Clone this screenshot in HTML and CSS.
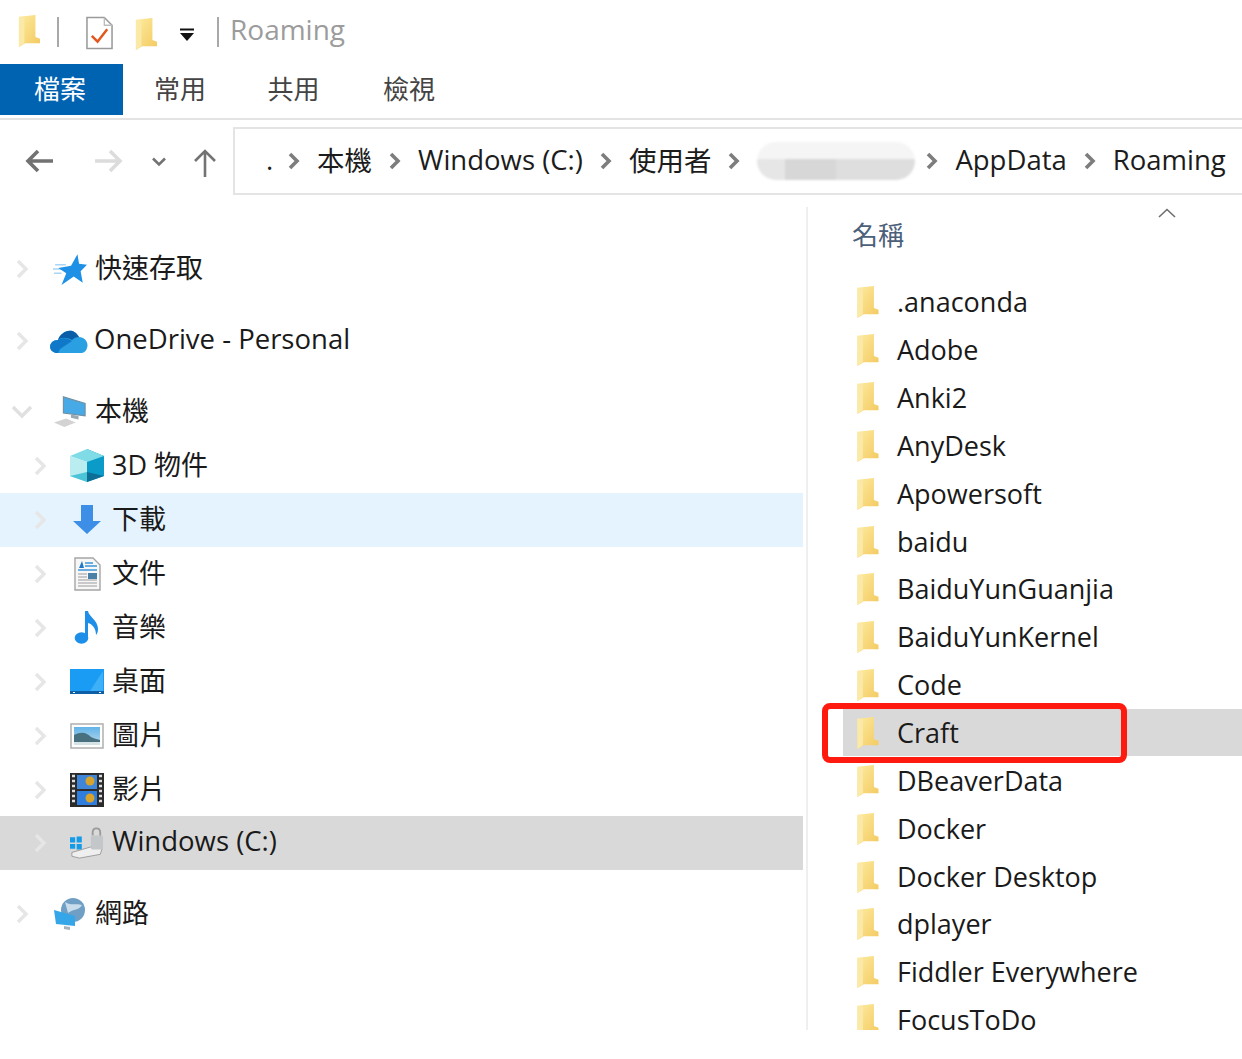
FILE: index.html
```html
<!DOCTYPE html>
<html lang="zh-Hant">
<head>
<meta charset="utf-8">
<title>Roaming</title>
<link rel="stylesheet" href="styles.css">
</head>
<body>
<svg class="defs" width="0" height="0" aria-hidden="true">
  <defs>
    <linearGradient id="fg" x1="0" y1="0" x2="1" y2="1"><stop offset="0" stop-color="#fdeb9f"/><stop offset="1" stop-color="#f3c95f"/></linearGradient>
    <linearGradient id="sky" x1="0" y1="0" x2="0" y2="1"><stop offset="0" stop-color="#62b4e8"/><stop offset="1" stop-color="#bcd9ea"/></linearGradient>
    <symbol id="folder" viewBox="0 0 24 36">
      <path d="M1 3 L19 1 V25 L24 27 V32 L8 32 L1 36 Z" fill="url(#fg)"/>
      <path d="M1 3 L7 4 V32 L1 36 Z" fill="#fbe9a8"/>
    </symbol>
    <symbol id="chev" viewBox="0 0 16 24">
      <path d="M4 4 L12 12 L4 20" fill="none" stroke="#e6e6e6" stroke-width="3.4"/>
    </symbol>
    <symbol id="sep" viewBox="0 0 14 20">
      <path d="M3 3 L10 10 L3 17" fill="none" stroke="#7d7d7d" stroke-width="3.6"/>
    </symbol>
  </defs>
</svg>
<div class="window">
  <div class="titlebar">
    <svg class="t-folder"><use href="#folder"/></svg>
    <span class="vline v1"></span>
    <svg class="t-check" viewBox="0 0 28 34"><path d="M1 1 H19 L27 9 V33 H1 Z" fill="#fff" stroke="#9a9a9a" stroke-width="1.6"/><path d="M19 1 V9 H27" fill="none" stroke="#bdbdbd" stroke-width="1.4"/><path d="M6 20 L12 26 L22 13" fill="none" stroke="#e2571e" stroke-width="2.6"/></svg>
    <svg class="t-folder t-f2"><use href="#folder"/></svg>
    <svg class="t-drop" viewBox="0 0 14 14"><path d="M0 1.5 H14" stroke="#111" stroke-width="2"/><path d="M0 5 H14 L7 13 Z" fill="#111"/></svg>
    <span class="vline v2"></span>
    <span class="t-name">Roaming</span>
  </div>
  <div class="ribbon">
    <div class="tab tab-file">檔案</div>
    <div class="tab tab-home">常用</div>
    <div class="tab tab-share">共用</div>
    <div class="tab tab-view">檢視</div>
  </div>
  <div class="addrrow">
    <svg class="nav-i back" viewBox="0 0 30 24"><path d="M28 12 H3 M13 2 L3 12 L13 22" fill="none" stroke="#727272" stroke-width="3.6"/></svg>
    <svg class="nav-i fwd" viewBox="0 0 30 24"><path d="M2 12 H27 M17 2 L27 12 L17 22" fill="none" stroke="#dcdcdc" stroke-width="3.6"/></svg>
    <svg class="nav-i down" viewBox="0 0 14 10"><path d="M1 1.5 L7 7.5 L13 1.5" fill="none" stroke="#737373" stroke-width="2.6"/></svg>
    <svg class="nav-i up" viewBox="0 0 24 30"><path d="M12 29 V3 M2 13 L12 3 L22 13" fill="none" stroke="#737373" stroke-width="2.6"/></svg>
    <div class="addr">
      <span class="dot">.</span>
      <svg class="sep"><use href="#sep"/></svg>
      <span>本機</span>
      <svg class="sep"><use href="#sep"/></svg>
      <span>Windows (C:)</span>
      <svg class="sep"><use href="#sep"/></svg>
      <span>使用者</span>
      <svg class="sep"><use href="#sep"/></svg>
      <span class="blurred"></span>
      <svg class="sep"><use href="#sep"/></svg>
      <span>AppData</span>
      <svg class="sep"><use href="#sep"/></svg>
      <span>Roaming</span>
    </div>
  </div>
  <div class="main">
    <nav class="tree">
      <div class="node lvl0 quick">
        <svg class="chev"><use href="#chev"/></svg>
        <svg class="ico" viewBox="0 0 32 32"><path d="M2 12 H12 M0 16 H9 M1 20 H8" stroke="#a9d6f5" stroke-width="1.4"/><path d="M23 2 L24.500 11 L32 12 L26 18 L28 29 L19.500 23 L8 31 L12.500 20 L5 15 L17 13 Z" fill="#1e90e6"/></svg>
        <span class="lbl">快速存取</span>
      </div>
      <div class="node lvl0 drive">
        <svg class="chev"><use href="#chev"/></svg>
        <svg class="ico ico-od" viewBox="0 0 38 26"><path d="M8 25 C-3 25 -2 12 8 12 C11 3 23 -2 29 9 C35 9 39 15 37 20 C36 24 33 25 31 25 Z" fill="#2a9fe2"/><path d="M8 12 C11 3 23 -2 29 9 C26 9 24 10 22 12 C17 9 11 9 8 12 Z" fill="#0a5ea8"/><path d="M8 25 C-3 25 -2 12 8 12 C13 9 18 10 22 13 L10 21 Z" fill="#0f78c8"/></svg>
        <span class="lbl lbl-l">OneDrive - Personal</span>
      </div>
      <div class="node lvl0 pc">
        <svg class="chev chev-open" viewBox="0 0 24 16"><path d="M3 3 L12 12 L21 3" fill="none" stroke="#e0e0e0" stroke-width="3.4"/></svg>
        <svg class="ico" viewBox="0 0 36 34"><path d="M11 1 L34 8 V21 L11 18 Z" fill="#47a9e6" stroke="#6f8fa3" stroke-width="1.2"/><path d="M19 20 L27 21 V25 L19 23 Z" fill="#9aa8b2"/><path d="M1 28 L14 24 L24 28 L12 33 Z" fill="#d3d3d3"/></svg>
        <span class="lbl">本機</span>
      </div>
      <div class="node lvl1 r3d">
        <svg class="chev"><use href="#chev"/></svg>
        <svg class="ico" viewBox="0 0 34 34"><path d="M17 0 L34 7 V27 L17 33 Z" fill="#0a9bc9"/><path d="M17 0 L34 7 L17 13 L0 7 Z" fill="#7fdce6"/><path d="M0 7 L17 13 V33 L0 27 Z" fill="#b9edf0"/><path d="M17 23 L34 27 L17 33 Z" fill="#0d6f96"/><path d="M0 27 L17 23 V33 Z" fill="#4cc4d8"/></svg>
        <span class="lbl">3D 物件</span>
      </div>
      <div class="node lvl1 hover">
        <svg class="chev"><use href="#chev"/></svg>
        <svg class="ico" viewBox="0 0 34 34"><path d="M11 2 H23 V18 H31 L17 31 L3 18 H11 Z" fill="#3c8ee6"/></svg>
        <span class="lbl">下載</span>
      </div>
      <div class="node lvl1">
        <svg class="chev"><use href="#chev"/></svg>
        <svg class="ico" viewBox="0 0 34 34"><path d="M5 1 H23 L30 8 V33 H5 Z" fill="#f7f7f7" stroke="#a5a5a5" stroke-width="1.4"/><path d="M9 11 L12 4 L14 11 Z" fill="#1e78c8"/><path d="M15 6 H23 M15 9 H27 M8 13 H27" stroke="#3d96da" stroke-width="1.3"/><path d="M8 17 H17 M8 20 H17 M8 23 H27 M8 26 H27 M8 29 H27" stroke="#9b9b9b" stroke-width="1.2"/><rect x="18" y="16" width="9" height="6" fill="#4a7fa8"/></svg>
        <span class="lbl">文件</span>
      </div>
      <div class="node lvl1">
        <svg class="chev"><use href="#chev"/></svg>
        <svg class="ico" viewBox="0 0 34 34"><ellipse cx="11.500" cy="27" rx="6.800" ry="5.800" fill="#1e8fe8"/><path d="M15 27 V0 H18 C19 6 28 9 28 18 C28 21 27 23 26 24 C26 17 22 13 18 12 V27 Z" fill="#1e8fe8"/></svg>
        <span class="lbl">音樂</span>
      </div>
      <div class="node lvl1">
        <svg class="chev"><use href="#chev"/></svg>
        <svg class="ico" viewBox="0 0 34 26"><rect width="34" height="25" fill="#1a9cf5"/><path d="M20 22 L33 2 V22 Z" fill="#3db0f8"/><rect y="22" width="34" height="3" fill="#0d5fa8"/><path d="M3 23.500 H5 M29 23.500 H31" stroke="#fff"/></svg>
        <span class="lbl">桌面</span>
      </div>
      <div class="node lvl1">
        <svg class="chev"><use href="#chev"/></svg>
        <svg class="ico" viewBox="0 0 34 26"><rect x="1" y="1" width="32" height="24" fill="#fff" stroke="#b4b4b4" stroke-width="1.6"/><rect x="4" y="4" width="26" height="18" fill="url(#sky)"/><path d="M4 12 C12 8 17 10 21 14 C25 16 28 16 30 17 V19 H4 Z" fill="#48707f"/><path d="M4 19 H30 V22 H4 Z" fill="#d5e2e6"/></svg>
        <span class="lbl">圖片</span>
      </div>
      <div class="node lvl1">
        <svg class="chev"><use href="#chev"/></svg>
        <svg class="ico" viewBox="0 0 34 34"><rect width="34" height="34" fill="#2b2b2b"/><rect x="7" y="2" width="20" height="14" fill="#3f86d8"/><rect x="7" y="18" width="20" height="14" fill="#2f7ddc"/><circle cx="20" cy="8" r="4.500" fill="#d9a22a"/><circle cx="20" cy="25" r="4.500" fill="#d9a22a"/><path d="M2 3 H5 M2 8 H5 M2 13 H5 M2 18 H5 M2 23 H5 M2 28 H5 M29 3 H32 M29 8 H32 M29 13 H32 M29 18 H32 M29 23 H32 M29 28 H32" stroke="#dedede" stroke-width="2.400"/></svg>
        <span class="lbl">影片</span>
      </div>
      <div class="node lvl1 selected">
        <svg class="chev"><use href="#chev"/></svg>
        <svg class="ico" viewBox="0 0 36 34"><path d="M0 11 H5.500 V16.500 H0 Z M7 10 H12.500 V16.500 H7 Z M0 18 H5.500 V23 H0 Z M7 18 H12.500 V24 H7 Z" fill="#169be8"/><path d="M2 27 L26 20 L34 23 L32 29 L10 33 L2 31 Z" fill="#efefef" stroke="#8a8a8a" stroke-width=".8"/><path d="M24 9 V6 C24 0 32 0 32 6 V10" fill="none" stroke="#9b9b9b" stroke-width="2"/><rect x="22" y="9" width="13" height="15" rx="2" fill="#c3c7c9"/></svg>
        <span class="lbl lbl-l lbl-c">Windows (C:)</span>
      </div>
      <div class="node lvl0 net">
        <svg class="chev"><use href="#chev"/></svg>
        <svg class="ico" viewBox="0 0 34 34"><circle cx="20" cy="13" r="12" fill="#6f9fc4"/><path d="M12 5 C18 9 24 6 29 8 C27 13 20 12 15 16 Z" fill="#c9dceb"/><path d="M1 13 L22 19 V29 L3 27 Z" fill="#35a6e8"/><path d="M11 29 L17 30 V33 L11 32 Z" fill="#a5b2bb"/></svg>
        <span class="lbl">網路</span>
      </div>
    </nav>
    <div class="divider"></div>
    <section class="files">
      <svg class="sort" viewBox="0 0 18 10"><path d="M1 9 L9 1.500 L17 9" fill="none" stroke="#6e6e6e" stroke-width="1.600"/></svg>
      <div class="colhead">名稱</div>
      <ul class="list">
        <li class="item"><svg class="fold"><use href="#folder"/></svg><span>.anaconda</span></li>
        <li class="item"><svg class="fold"><use href="#folder"/></svg><span>Adobe</span></li>
        <li class="item"><svg class="fold"><use href="#folder"/></svg><span>Anki2</span></li>
        <li class="item"><svg class="fold"><use href="#folder"/></svg><span>AnyDesk</span></li>
        <li class="item"><svg class="fold"><use href="#folder"/></svg><span>Apowersoft</span></li>
        <li class="item"><svg class="fold"><use href="#folder"/></svg><span>baidu</span></li>
        <li class="item"><svg class="fold"><use href="#folder"/></svg><span>BaiduYunGuanjia</span></li>
        <li class="item"><svg class="fold"><use href="#folder"/></svg><span>BaiduYunKernel</span></li>
        <li class="item"><svg class="fold"><use href="#folder"/></svg><span>Code</span></li>
        <li class="item item-sel"><svg class="fold"><use href="#folder"/></svg><span>Craft</span></li>
        <li class="item"><svg class="fold"><use href="#folder"/></svg><span>DBeaverData</span></li>
        <li class="item"><svg class="fold"><use href="#folder"/></svg><span>Docker</span></li>
        <li class="item"><svg class="fold"><use href="#folder"/></svg><span>Docker Desktop</span></li>
        <li class="item"><svg class="fold"><use href="#folder"/></svg><span>dplayer</span></li>
        <li class="item"><svg class="fold"><use href="#folder"/></svg><span>Fiddler Everywhere</span></li>
        <li class="item"><svg class="fold"><use href="#folder"/></svg><span>FocusToDo</span></li>
      </ul>
      <div class="redbox"></div>
    </section>
  </div>
</div>
</body>
</html>
```
FILE: styles.css
```css
html, body { margin: 0; padding: 0; background: #fff; }
body { width: 1242px; height: 1059px; overflow: hidden; }
.defs { position: absolute; }
.window {
  width: 1242px; height: 1059px; display: flex; flex-direction: column;
  font-family: "Open Sans", "Noto Sans CJK TC", sans-serif; color: #1a1a1a; font-size: 28px;
}
.titlebar { height: 64px; display: flex; align-items: center; flex: none; }
.t-folder { width: 22px; height: 33px; margin-left: 18px; margin-top: -3px; flex: none; }
.vline { width: 2px; height: 30px; background: #a9a9a9; flex: none; }
.v1 { margin-left: 17px; }
.t-check { width: 27px; height: 34px; margin-left: 27px; margin-top: 1px; flex: none; }
.t-f2 { margin-left: 22px; margin-top: 2px; }
.t-drop { width: 14px; height: 14px; margin-left: 23px; margin-top: 6px; flex: none; }
.v2 { margin-left: 23px; }
.t-name { margin-left: 11px; font-size: 28px; color: #9c9c9c; margin-top: -6px; }
.ribbon { height: 51px; display: flex; flex: none; font-size: 26px; }
.tab { display: flex; align-items: center; justify-content: center; color: #444; font-family: "Noto Sans CJK TC", sans-serif; padding-bottom: 4px; box-sizing: border-box; }
.tab-file { width: 123px; background: #0063b1; color: #fff; padding-right: 3px; }
.tab-home { width: 114px; }
.tab-share { width: 113px; }
.tab-view { width: 118px; }
.addrrow { height: 77px; margin-top: 3px; border-top: 2px solid #e3e3e3; display: flex; align-items: center; flex: none; }
.nav-i { flex: none; }
.back { width: 30px; height: 24px; margin-left: 25px; margin-top: 4px; }
.fwd { width: 30px; height: 24px; margin-left: 38px; margin-top: 4px; }
.down { width: 14px; height: 10px; margin-left: 29px; margin-top: 6px; }
.up { width: 24px; height: 30px; margin-left: 27px; margin-top: 8px; }
.addr {
  margin-left: 16px; height: 68px; margin-top: 5px; box-sizing: border-box; flex: 1; min-width: 0;
  border: 2px solid #e4e4e4; border-right: 0; display: flex; align-items: center; padding-left: 31px; padding-bottom: 4px;
  white-space: nowrap; overflow: hidden; font-size: 27.500px; color: #1c1c1c;
}
.addr span { flex: none; }
.sep { width: 14px; height: 20px; margin: 4px 16px 0 16px; flex: none; }
.dot { width: 5px; }
.blurred {
  width: 158px; height: 38px; border-radius: 19px; margin-top: 4px; margin-right: -6px; filter: blur(1px);
  background:
    linear-gradient(#f5f5f5, #f5f5f5) top / 100% 45% no-repeat,
    linear-gradient(90deg, #e6e6e6 0 18%, #d7d7d7 18% 50%, #dedede 50% 100%);
}
.main { flex: 1; display: flex; min-height: 0; }
.tree { width: 803px; flex: none; padding-top: 45px; box-sizing: border-box; }
.node { height: 54px; display: flex; align-items: center; }
.drive { margin-top: 18px; }
.pc { margin-top: 17px; }
.net { margin-top: 17px; }
.chev { width: 16px; height: 24px; flex: none; }
.chev-open { width: 24px; height: 16px; }
.lvl0 .chev { margin-left: 14px; }
.lvl0 .chev-open { margin-left: 10px; margin-right: -4px; }
.lvl1 .chev { margin-left: 32px; }
.ico { width: 34px; height: 34px; flex: none; }
.lvl0 .ico { margin-left: 23px; }
.lvl1 .ico { margin-left: 22px; }
.lvl0 .ico-od { height: 26px; margin-left: 20px; width: 38px; }
.lbl { font-size: 27px; margin-left: 8px; margin-bottom: 5px; white-space: nowrap; }
.lbl-l { font-size: 27.500px; }
.drive .lbl { margin-left: 6px; }
.lvl1 .lbl-c { margin-left: 8px; }
.hover { background: #e5f3ff; }
.selected { background: #d9d9d9; margin-top: -1px; }
.divider { width: 2px; margin-left: 3px; background: #efefef; height: 823px; margin-top: 10px; flex: none; }
.files { flex: 1; position: relative; min-width: 0; }
.sort { position: absolute; left: 350px; top: 11px; width: 18px; height: 10px; }
.colhead { font-size: 26px; color: #4c607a; padding-left: 44px; height: 81px; padding-top: 19px; box-sizing: border-box; font-family: "Noto Sans CJK TC", sans-serif; line-height: 36px; }
.list { list-style: none; margin: 0; padding: 0; height: 752px; overflow: hidden; }
.item { height: 47.850px; display: flex; align-items: center; padding-left: 48px; font-size: 27px; white-space: nowrap; }
.fold { width: 23px; height: 33px; flex: none; }
.item span { margin-left: 18px; }
.item-sel { background: linear-gradient(90deg, transparent 0, transparent 35px, #d9d9d9 35px); }
.redbox { position: absolute; left: 14px; top: 506px; width: 305px; height: 60px; box-sizing: border-box; border: 6px solid #ff1a0f; border-radius: 8px; }
```
